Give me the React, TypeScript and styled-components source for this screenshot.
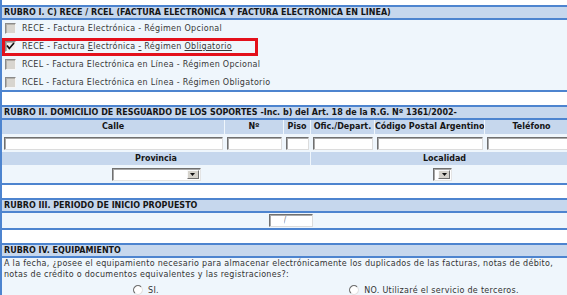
import React from 'react';
import styled, { createGlobalStyle } from 'styled-components';

const Global = createGlobalStyle`
  html, body { margin: 0; padding: 0; background: #fff; }
  body {
    font-family: "DejaVu Sans", Verdana, sans-serif;
    font-size: 8px;
    color: #333;
  }
`;

const BLUE = '#4d84cf';
const HEAD = '#c6d7ed';
const BODY = '#eff6fc';

const Page = styled.div`
  width: 576px;
  padding-top: 5px;
  border-left: 2px solid ${BLUE};
  display: flex;
  flex-direction: column;
  gap: 13px;
  min-height: 300px;
`;

const Section = styled.section`
  border-top: 2px solid ${BLUE};
  border-bottom: 2px solid ${BLUE};
  background: ${BODY};
`;

const Header = styled.div`
  height: 11px;
  line-height: 11px;
  padding-left: 2px;
  background: ${HEAD};
  border-bottom: 2px solid ${BLUE};
  font-weight: bold;
  color: #151515;
  white-space: nowrap;
  overflow: hidden;
`;

const CheckList = styled.div`
  display: flex;
  flex-direction: column;
  gap: 4px;
  padding: 1px 0;
`;

const CheckRow = styled.label`
  position: relative;
  height: 14px;
  display: flex;
  align-items: center;
  white-space: nowrap;
`;

const CheckBox = styled.span<{ $checked?: boolean }>`
  flex: none;
  width: 11px;
  height: 11px;
  box-sizing: border-box;
  margin-left: 3px;
  border: 1px solid;
  border-color: #8a8a8a #f6f6f6 #f6f6f6 #8a8a8a;
  box-shadow: inset 1px 1px 0 #b4b1aa;
  background: ${(p) => (p.$checked ? '#f0f0f0' : '#d8d5cf')};
  display: flex;
  align-items: center;
  justify-content: center;
`;

const CheckText = styled.span`
  margin-left: 6px;
  color: #383838;
  letter-spacing: 0.3px;
`;

const U = styled.span`
  text-decoration: underline;
`;

const RedMark = styled.span`
  position: absolute;
  left: 0;
  top: -1px;
  width: 256px;
  height: 18px;
  box-sizing: border-box;
  border: 3px solid #e3101b;
  pointer-events: none;
`;

const AddressGrid = styled.div`
  display: grid;
  grid-template-columns: 222px 58px 26px 63px 109px 1fr;
  column-gap: 1px;
  background: ${BODY};
`;

const ColHead = styled.div<{ $h?: number }>`
  height: ${(p) => p.$h ?? 14}px;
  line-height: ${(p) => p.$h ?? 14}px;
  background: ${HEAD};
  font-weight: bold;
  color: #151515;
  text-align: center;
  white-space: nowrap;
  overflow: hidden;
`;

const Cell = styled.div<{ $h?: number; $offset?: number }>`
  height: ${(p) => p.$h ?? 18}px;
  display: flex;
  align-items: center;
  justify-content: ${(p) => (p.$offset ? 'flex-start' : 'center')};
  padding-left: ${(p) => p.$offset ?? 0}px;
`;

const LocalGrid = styled.div`
  display: grid;
  grid-template-columns: 308px 1fr;
  column-gap: 1px;
`;

const TextInput = styled.input`
  box-sizing: border-box;
  width: calc(100% - 3px);
  height: 13px;
  margin: 0 0 0 1px;
  padding: 0 2px;
  background: #fff;
  border: 1px solid;
  border-color: #707070 #dcdcdc #dcdcdc #707070;
  box-shadow: inset 1px 1px 0 #a8a8a8;
  font-family: inherit;
  font-size: 8px;
  color: #888;
  outline: none;
`;

const ShortInput = styled(TextInput)`
  width: 44px;
  margin: 0 0 0 1px;
  padding-left: 14px;
`;

const SelectBox = styled.div<{ $w: number }>`
  box-sizing: border-box;
  width: ${(p) => p.$w}px;
  height: 13px;
  background: #fff;
  border: 1px solid;
  border-color: #707070 #e4e4e4 #e4e4e4 #707070;
  box-shadow: inset 1px 1px 0 #a8a8a8;
  display: flex;
  justify-content: flex-end;
  padding: 1px;
`;

const SelectButton = styled.span`
  box-sizing: border-box;
  width: 12px;
  height: 100%;
  background: #d6d3cc;
  border: 1px solid;
  border-color: #f8f8f8 #6f6f6f #6f6f6f #f8f8f8;
  display: flex;
  align-items: center;
  justify-content: center;
`;

const PeriodBody = styled.div`
  height: 15px;
  display: flex;
  align-items: center;
  justify-content: center;
`;

const Question = styled.p`
  margin: 0;
  padding-left: 2px;
  line-height: 11px;
  white-space: nowrap;
  color: #333;
  letter-spacing: 0.3px;
`;

const RadioRow = styled.div`
  display: grid;
  grid-template-columns: 1fr 1fr;
  margin-top: 3px;
  height: 14px;
`;

const RadioOption = styled.label`
  display: flex;
  align-items: center;
  justify-content: center;
  gap: 5px;
  color: #333;
  white-space: nowrap;
  letter-spacing: 0.3px;
`;

function Check({ checked }: { checked?: boolean }) {
  return (
    <CheckBox $checked={checked}>
      {checked && (
        <svg width="9" height="9" viewBox="0 0 9 9">
          <path d="M1 3.5 L3.3 6.5 L8 1" fill="none" stroke="#111" strokeWidth="1.7" />
        </svg>
      )}
    </CheckBox>
  );
}

function Radio() {
  return (
    <svg width="10" height="10" viewBox="0 0 10 10">
      <circle cx="5" cy="5" r="4.3" fill="#fff" />
      <path d="M8.1 1.9 A4.3 4.3 0 0 0 1.9 8.1" fill="none" stroke="#6e6e6e" strokeWidth="1.2" />
      <path d="M1.9 8.1 A4.3 4.3 0 0 0 8.1 1.9" fill="none" stroke="#e2e2e2" strokeWidth="1.2" />
    </svg>
  );
}

function Select({ width }: { width: number }) {
  return (
    <SelectBox $w={width}>
      <SelectButton>
        <svg width="5" height="3" viewBox="0 0 5 3">
          <path d="M0 0 H5 L2.5 3 Z" fill="#111" />
        </svg>
      </SelectButton>
    </SelectBox>
  );
}

export default function App() {
  return (
    <>
      <Global />
      <Page>
        <Section>
          <Header>RUBRO I. C) RECE / RCEL (FACTURA ELECTRÓNICA Y FACTURA ELECTRÓNICA EN LINEA)</Header>
          <CheckList>
            <CheckRow>
              <Check />
              <CheckText>RECE - Factura Electrónica - Régimen Opcional</CheckText>
            </CheckRow>
            <CheckRow>
              <Check checked />
              <CheckText>
                RECE - Factura <U>E</U>lectrónica <U>-</U> Régimen <U>Obligatorio</U>
              </CheckText>
              <RedMark />
            </CheckRow>
            <CheckRow>
              <Check />
              <CheckText>RCEL - Factura Electrónica en Línea - Régimen Opcional</CheckText>
            </CheckRow>
            <CheckRow>
              <Check />
              <CheckText>RCEL - Factura Electrónica en Línea - Régimen Obligatorio</CheckText>
            </CheckRow>
          </CheckList>
        </Section>

        <Section>
          <Header>RUBRO II. DOMICILIO DE RESGUARDO DE LOS SOPORTES -Inc. b) del Art. 18 de la R.G. Nº 1361/2002-</Header>
          <AddressGrid>
            <ColHead>Calle</ColHead>
            <ColHead>Nº</ColHead>
            <ColHead>Piso</ColHead>
            <ColHead>Ofic./Depart.</ColHead>
            <ColHead>Código Postal Argentino</ColHead>
            <ColHead>Teléfono</ColHead>
            <Cell><TextInput /></Cell>
            <Cell><TextInput /></Cell>
            <Cell><TextInput /></Cell>
            <Cell><TextInput /></Cell>
            <Cell><TextInput /></Cell>
            <Cell><TextInput /></Cell>
          </AddressGrid>
          <LocalGrid>
            <ColHead $h={13}>Provincia</ColHead>
            <ColHead $h={13}>Localidad</ColHead>
            <Cell><Select width={89} /></Cell>
            <Cell $offset={122}><Select width={19} /></Cell>
          </LocalGrid>
        </Section>

        <Section>
          <Header>RUBRO III. PERIODO DE INICIO PROPUESTO</Header>
          <PeriodBody>
            <ShortInput defaultValue="/" />
          </PeriodBody>
        </Section>

        <Section>
          <Header>RUBRO IV. EQUIPAMIENTO</Header>
          <Question>
            A la fecha, ¿posee el equipamiento necesario para almacenar electrónicamente los duplicados de las facturas, notas de débito,
            <br />
            notas de crédito o documentos equivalentes y las registraciones?:
          </Question>
          <RadioRow>
            <RadioOption>
              <Radio />
              SI.
            </RadioOption>
            <RadioOption>
              <Radio />
              NO. Utilizaré el servicio de terceros.
            </RadioOption>
          </RadioRow>
        </Section>
      </Page>
    </>
  );
}
